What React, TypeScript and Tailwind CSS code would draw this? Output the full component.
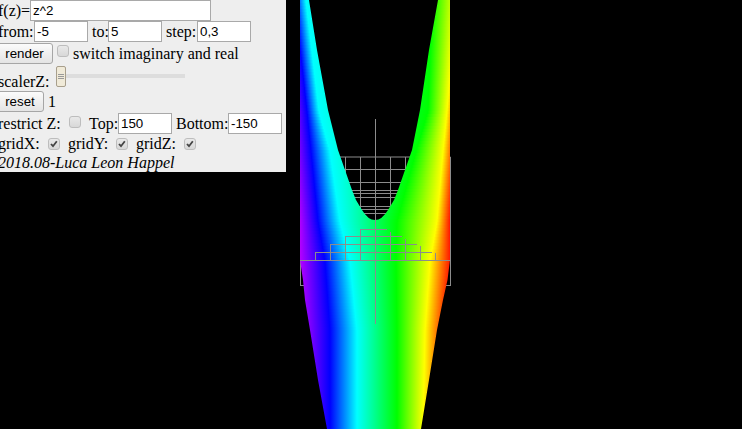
import React from "react";

// keyed rows of where each hue sits across the surface
const hueRows = [
  { y: 0, stops: [270, 295, 306, 432, 456, 480] },
  { y: 110, stops: [285, 307, 319, 428, 447, 458] },
  { y: 150, stops: [287, 311, 330, 416, 443, 456] },
  { y: 220, stops: [292, 318, 340, 397, 437, 451] },
  { y: 260, stops: [290, 325, 350, 396, 430, 452] },
  { y: 330, stops: [290, 330, 357, 397, 425, 447] },
  { y: 429, stops: [290, 330, 357, 397, 423, 447] },
];
const hueColors = ["#ff00ff", "#0000ff", "#00ffff", "#00ff00", "#ffff00", "#ff0000"];

const stopsAt = (y: number) => {
  let i = 0;
  while (i < hueRows.length - 2 && y > hueRows[i + 1].y) i++;
  const a = hueRows[i];
  const b = hueRows[i + 1];
  const t = (y - a.y) / (b.y - a.y);
  return a.stops.map((s, k) => s + (b.stops[k] - s) * t);
};

const rows = Array.from({ length: 143 }, (_, i) => i * 3);

const surfacePath =
  "M300 0 L309 0 L317 50 L328 110 L333 130 L338 150 L345 170 L352 190 L356 200 L362 210 Q368 220 375 220 Q382 220 388 210 L394 200 L398 190 L405 170 L412 150 L416 130 L420 110 L429 50 L438 0 L450 0 L450 260 L447.5 280 L443 300 L437 330 L429 380 L421 429 L327 429 L318 380 L310 330 L305 300 L303 280 L300 260 Z";

const backLines = [
  "M300.5 157H450.5",
  "M345.5 157V200M360.5 157V215M390.5 157V215M405.5 157V200",
  "M335 169.5H416M340 182.5H410M345 190.5H405M346 193.5H404M348 197.5H402M350 206.5H400M352 209.5H398M355 213.5H395",
  "M300.5 157V286M450.5 157V286M300 285.5H451",
];

const frontLines = [
  "M375.5 119V324",
  "M360 229.5H387M345 236.5H402M330 244.5H417M315 252.5H432M300 260.5H450",
  "M315.5 252V260M330.5 244V260M345.5 236V260M360.5 229V260",
  "M390.5 232V260M405.5 239V260M420.5 246V260M435.5 253V260",
];

const Surface = () => (
  <svg width="742" height="429" viewBox="0 0 742 429" className="block">
    <defs>
      {rows.map((y) => {
        const stops = stopsAt(y);
        return (
          <linearGradient key={y} id={`row${y}`} gradientUnits="userSpaceOnUse" x1={stops[0]} x2={stops[5]} y1="0" y2="0">
            {stops.map((s, k) => (
              <stop key={k} offset={(s - stops[0]) / (stops[5] - stops[0])} stopColor={hueColors[k]} />
            ))}
          </linearGradient>
        );
      })}
      <clipPath id="surface">
        <path d={surfacePath} />
      </clipPath>
    </defs>
    {backLines.map((d) => (
      <path key={d} d={d} stroke="#8c8c8c" fill="none" />
    ))}
    <g clipPath="url(#surface)">
      {rows.map((y) => (
        <rect key={y} x="298" y={y} width="154" height="3" fill={`url(#row${y})`} shapeRendering="crispEdges" />
      ))}
    </g>
    {frontLines.map((d) => (
      <path key={d} d={d} stroke="#8c8c8c" fill="none" />
    ))}
  </svg>
);

const Field = ({ value, className }: { value: string; className: string }) => (
  <input
    readOnly
    value={value}
    className={`h-[21px] shrink-0 border border-[#a9a9a9] bg-white px-[2px] text-[13.33px] text-black outline-none font-['Liberation_Sans',sans-serif] ${className}`}
  />
);

const Check = ({ on, className }: { on?: boolean; className?: string }) => (
  <span
    className={`flex h-[12px] w-[12px] shrink-0 items-center justify-center rounded-[3px] border border-[#bdbdbd] bg-gradient-to-b from-[#e9e9e9] to-[#d8d8d8] ${className ?? ""}`}
  >
    {on && (
      <svg width="8" height="8" viewBox="0 0 8 8">
        <path d="M1 4 L3 6.2 L6.8 1.2" stroke="#444" strokeWidth="1.8" fill="none" />
      </svg>
    )}
  </span>
);

const Btn = ({ label, className }: { label: string; className: string }) => (
  <button className={`h-[21px] shrink-0 rounded-[3px] border border-[#a6a6a6] bg-gradient-to-b from-[#fbfbfb] to-[#e4e4e4] text-[13.33px] text-black font-['Liberation_Sans',sans-serif] ${className}`}>
    {label}
  </button>
);

export default function App() {
  return (
    <div className="relative h-[429px] w-[742px] overflow-hidden bg-black">
      <Surface />
      <div className="absolute left-0 top-0 flex h-[172px] w-[286px] flex-col overflow-hidden bg-[#eeeeee] text-[16px] leading-[18px] text-black font-['Liberation_Serif',serif]">
        <div className="flex h-[21px] items-center">
          <span className="ml-[-2px] w-[32px] shrink-0">f(z)=</span>
          <Field value="z^2" className="w-[181px]" />
        </div>
        <div className="flex h-[21px] items-center">
          <span className="ml-[-2px] w-[36px] shrink-0">from:</span>
          <Field value="-5" className="w-[54px]" />
          <span className="ml-[4px] w-[16px] shrink-0">to:</span>
          <Field value="5" className="w-[54px]" />
          <span className="ml-[4px] w-[31px] shrink-0">step:</span>
          <Field value="0,3" className="w-[54px]" />
        </div>
        <div className="mt-[1px] flex h-[21px] items-center">
          <Btn label="render" className="ml-[-4px] w-[57px]" />
          <Check className="ml-[4px] mb-[5px]" />
          <span className="ml-[4px] whitespace-nowrap">switch imaginary and real</span>
        </div>
        <div className="mt-[2px] flex h-[21px] items-center">
          <span className="ml-[-2px] w-[58px] shrink-0 translate-y-[5px]">scalerZ:</span>
          <div className="relative h-[21px] w-[129px]">
            <div className="absolute left-[8px] top-[8px] h-[4px] w-[121px] bg-[#dddddd]" />
            <div className="absolute left-0 top-0 flex h-[21px] w-[10px] flex-col items-center justify-center gap-[1px] rounded-[2px] border border-[#a89f8c] bg-[#f0ead8]">
              <span className="h-px w-[6px] bg-[#999999]" />
              <span className="h-px w-[6px] bg-[#999999]" />
              <span className="h-px w-[6px] bg-[#999999]" />
            </div>
          </div>
        </div>
        <div className="mt-[4px] flex h-[21px] items-center">
          <Btn label="reset" className="ml-[-4px] w-[48px]" />
          <span className="ml-[4px]">1</span>
        </div>
        <div className="mt-[1px] flex h-[21px] items-center">
          <span className="ml-[-2px] w-[71px] shrink-0 whitespace-nowrap">restrict Z:</span>
          <Check className="mb-[4px]" />
          <span className="ml-[8px] w-[29px] shrink-0">Top:</span>
          <Field value="150" className="w-[54px]" />
          <span className="ml-[4px] w-[52px] shrink-0">Bottom:</span>
          <Field value="-150" className="w-[54px]" />
        </div>
        <div className="flex h-[20px] items-center">
          <span className="ml-[-2px] w-[50px] shrink-0">gridX:</span>
          <Check on />
          <span className="ml-[8px] w-[48px] shrink-0">gridY:</span>
          <Check on />
          <span className="ml-[8px] w-[48px] shrink-0">gridZ:</span>
          <Check on />
        </div>
        <div className="mt-[1px] flex h-[18px] items-center">
          <i className="ml-[-2px] whitespace-nowrap">2018.08-Luca Leon Happel</i>
        </div>
      </div>
    </div>
  );
}
